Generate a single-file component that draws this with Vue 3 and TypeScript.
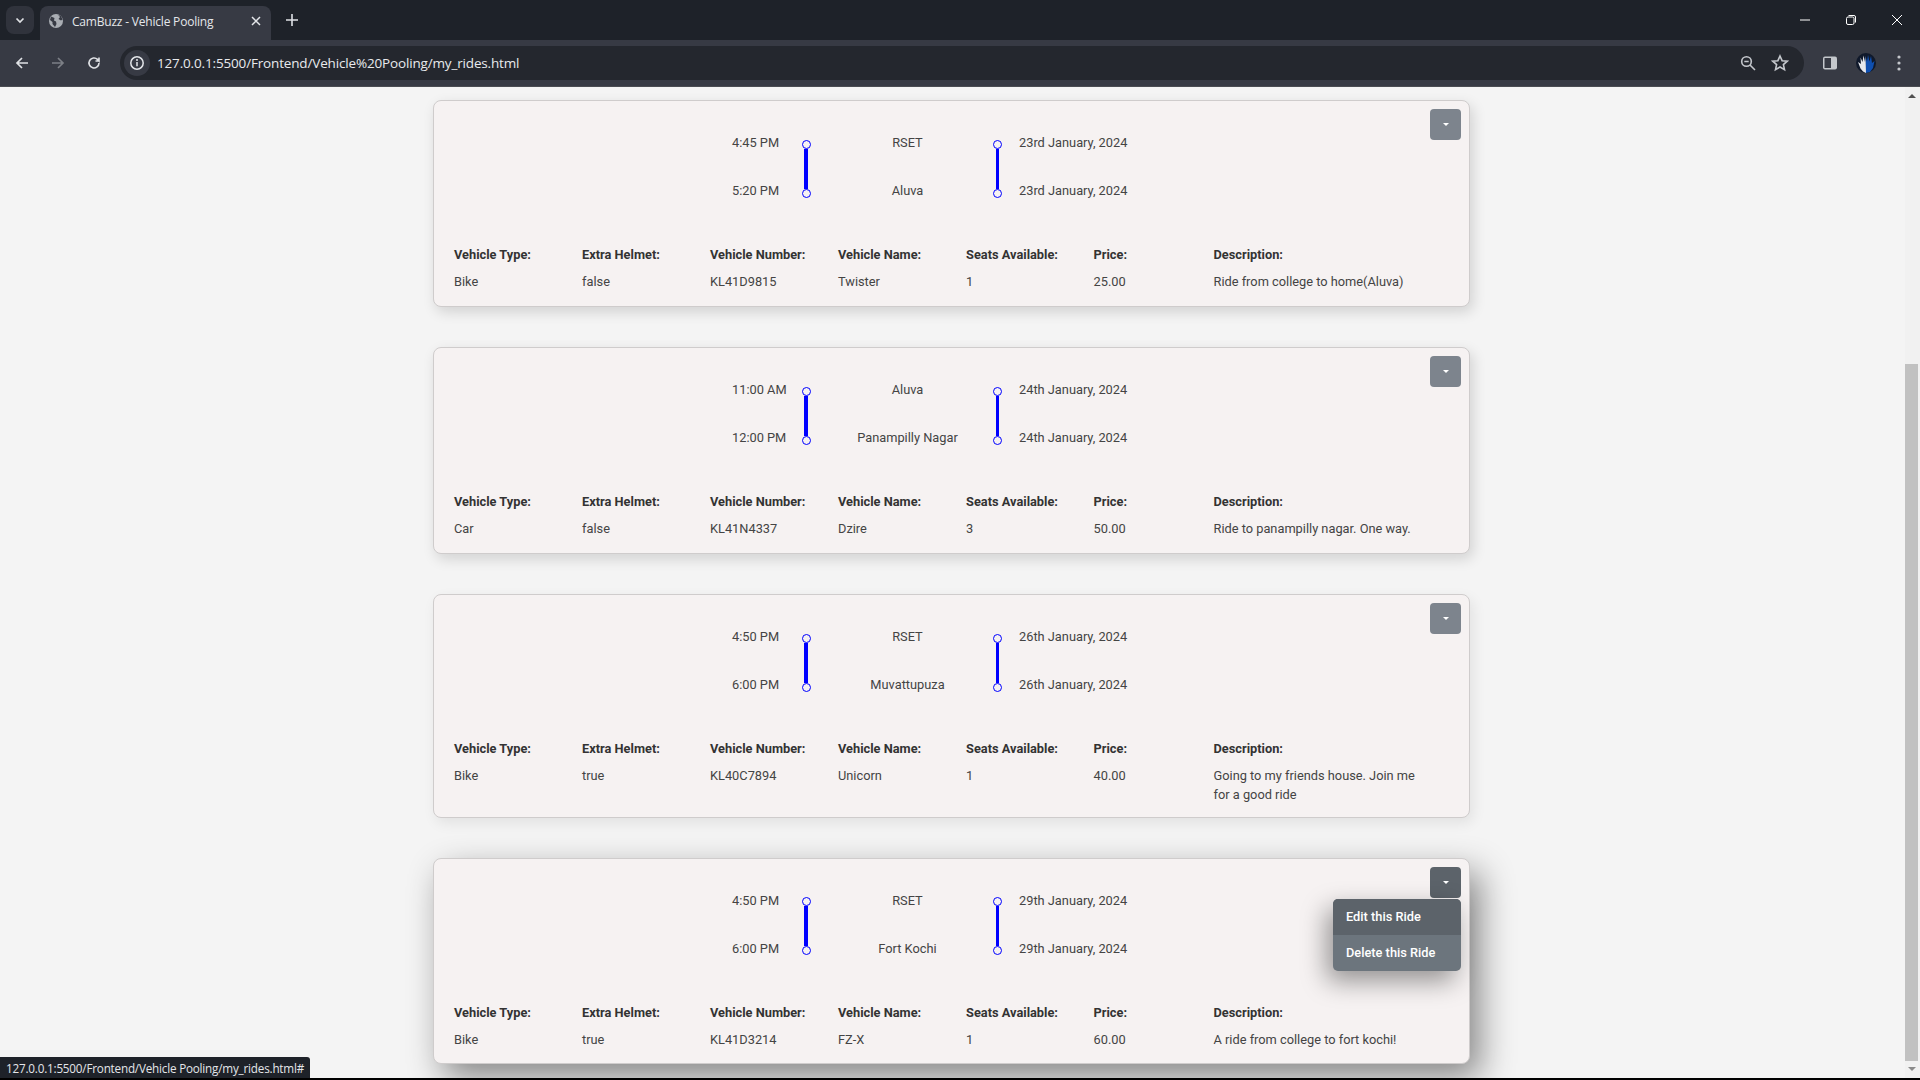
<script setup lang="ts">
interface Ride {
  times: [string, string]
  places: [string, string]
  date: string
  type: string
  helmet: string
  number: string
  name: string
  seats: string
  price: string
  desc: string
}
const rides: Ride[] = [
  { times: ['4:45 PM', '5:20 PM'], places: ['RSET', 'Aluva'], date: '23rd January, 2024', type: 'Bike', helmet: 'false', number: 'KL41D9815', name: 'Twister', seats: '1', price: '25.00', desc: 'Ride from college to home(Aluva)' },
  { times: ['11:00 AM', '12:00 PM'], places: ['Aluva', 'Panampilly Nagar'], date: '24th January, 2024', type: 'Car', helmet: 'false', number: 'KL41N4337', name: 'Dzire', seats: '3', price: '50.00', desc: 'Ride to panampilly nagar. One way.' },
  { times: ['4:50 PM', '6:00 PM'], places: ['RSET', 'Muvattupuza'], date: '26th January, 2024', type: 'Bike', helmet: 'true', number: 'KL40C7894', name: 'Unicorn', seats: '1', price: '40.00', desc: 'Going to my friends house. Join me for a good ride' },
  { times: ['4:50 PM', '6:00 PM'], places: ['RSET', 'Fort Kochi'], date: '29th January, 2024', type: 'Bike', helmet: 'true', number: 'KL41D3214', name: 'FZ-X', seats: '1', price: '60.00', desc: 'A ride from college to fort kochi!' },
]
const labels = ['Vehicle Type:', 'Extra Helmet:', 'Vehicle Number:', 'Vehicle Name:', 'Seats Available:', 'Price:', 'Description:']
</script>

<template>
  <div class="window">
    <header class="tabstrip">
      <button class="tabsearch">
        <svg width="12" height="12" viewBox="0 0 12 12"><path d="M2.5 4.5 6 8l3.5-3.5" fill="none" stroke="#dfe1e5" stroke-width="1.7" /></svg>
      </button>
      <div class="tab">
        <svg width="16" height="16" viewBox="0 0 16 16"><circle cx="8" cy="8" r="7" fill="#a9adb3" /><path d="M3 3.5 6.5 5 6 7.500 8 8.500 8.500 11 7 14 4.500 11 4.500 9 2 7ZM10 1.800 12 4 10.500 6 13 7.500 14.500 6.500 13 3Z" fill="#373a44" /></svg>
        <span class="tabtitle">CamBuzz - Vehicle Pooling</span>
        <svg class="tabx" width="10" height="10" viewBox="0 0 10 10"><path d="M1 1l8 8M9 1 1 9" stroke="#e4e6ea" stroke-width="1.500" /></svg>
      </div>
      <svg class="newtab" width="14" height="14" viewBox="0 0 14 14"><path d="M7 1v12M1 7h12" stroke="#dfe1e5" stroke-width="1.600" /></svg>
      <div class="winbtns">
        <svg width="12" height="12" viewBox="0 0 12 12"><path d="M1 6h10" stroke="#fff" stroke-width="1" /></svg>
        <svg width="12" height="12" viewBox="0 0 12 12"><rect x="1.500" y="3" width="7.500" height="7.500" rx="1.500" fill="none" stroke="#fff" /><path d="M3.500 1.500h5.500a1.500 1.500 0 0 1 1.500 1.500v5.500" fill="none" stroke="#fff" /></svg>
        <svg width="12" height="12" viewBox="0 0 12 12"><path d="M1 1l10 10M11 1 1 11" stroke="#fff" stroke-width="1" /></svg>
      </div>
    </header>

    <nav class="toolbar">
      <svg class="nav first" width="16" height="16" viewBox="0 0 16 16"><path d="M14 8H3M8 3 3 8l5 5" fill="none" stroke="#dfe1e5" stroke-width="1.700" /></svg>
      <svg class="nav" width="16" height="16" viewBox="0 0 16 16"><path d="M2 8h11M8 3l5 5-5 5" fill="none" stroke="#7c7f86" stroke-width="1.700" /></svg>
      <svg class="nav" width="16" height="16" viewBox="0 0 16 16"><path d="M13 8a5 5 0 1 1-1.500-3.600L13 6V2.500M13 6H9.500" fill="none" stroke="#dfe1e5" stroke-width="1.600" /></svg>
      <div class="omnibox">
        <span class="chip">
          <svg width="16" height="16" viewBox="0 0 16 16"><circle cx="8" cy="8" r="6.200" fill="none" stroke="#e4e6ea" stroke-width="1.500" /><path d="M8 7v4.200" stroke="#e4e6ea" stroke-width="1.500" /><circle cx="8" cy="5" r="1" fill="#e4e6ea" /></svg>
        </span>
        <span class="url">127.0.0.1:5500/Frontend/Vehicle%20Pooling/my_rides.html</span>
        <svg class="zoomicon" width="16" height="16" viewBox="0 0 16 16"><circle cx="6.500" cy="6.500" r="4.800" fill="none" stroke="#c4c7cc" stroke-width="1.600" /><path d="M4.300 6.500h4.400M10 10l5 5" stroke="#c4c7cc" stroke-width="1.600" /></svg>
        <svg class="star" width="18" height="18" viewBox="0 0 18 18"><path d="M9 2l2.100 4.700 5.100.5-3.800 3.400 1.100 5L9 13l-4.500 2.600 1.100-5L1.800 7.200l5.100-.5Z" fill="none" stroke="#c4c7cc" stroke-width="1.600" /></svg>
      </div>
      <svg class="panel" width="16" height="16" viewBox="0 0 16 16"><rect x="1" y="1.500" width="14" height="13" rx="2" fill="#c4c7cc" /><rect x="2.500" y="3" width="6.500" height="10" fill="#373a44" /></svg>
      <svg class="avatar" width="20" height="20" viewBox="0 0 20 20"><circle cx="10" cy="10" r="10" fill="#10192b" /><path d="M9.500 3 11 8.500 12 2l1.500 6.500L15 3l1 7 2.500-2-1.500 7-3 4-4.500 1Z" fill="#0f4fb0" /><path d="M9.500 3 9 9 7.500 2.500 6.500 9 4.500 4.500l.5 6.500-3-2 2.500 6.500 2.500 3 3 1.500Z" fill="#e6e8ec" /></svg>
      <svg class="dots" width="4" height="16" viewBox="0 0 4 16"><circle cx="2" cy="2" r="1.600" fill="#c4c7cc" /><circle cx="2" cy="8" r="1.600" fill="#c4c7cc" /><circle cx="2" cy="14" r="1.600" fill="#c4c7cc" /></svg>
    </nav>

    <div class="viewport">
      <main class="page">
        <article v-for="(r, i) in rides" :key="i" class="card" :class="{ hovered: i === 3, plain: i === 2 }">
          <div class="dropdown">
            <button class="toggle" :class="{ open: i === 3 }"><span class="caret"></span></button>
            <div v-if="i === 3" class="menu">
              <a class="item active">Edit this Ride</a>
              <a class="item">Delete this Ride</a>
            </div>
          </div>
          <section class="route">
            <div class="stack time"><span>{{ r.times[0] }}</span><span>{{ r.times[1] }}</span></div>
            <div class="tlslot first"><i class="dot"></i><i class="bar thick"></i><i class="dot"></i></div>
            <div class="stack place"><span>{{ r.places[0] }}</span><span>{{ r.places[1] }}</span></div>
            <div class="tlslot second"><i class="dot"></i><i class="bar"></i><i class="dot"></i></div>
            <div class="stack date"><span>{{ r.date }}</span><span>{{ r.date }}</span></div>
          </section>
          <section class="details">
            <b v-for="l in labels" :key="l">{{ l }}</b>
            <span>{{ r.type }}</span>
            <span>{{ r.helmet }}</span>
            <span>{{ r.number }}</span>
            <span>{{ r.name }}</span>
            <span>{{ r.seats }}</span>
            <span>{{ r.price }}</span>
            <span class="desc">{{ r.desc }}</span>
          </section>
        </article>
      </main>
      <aside class="scrollbar">
        <span class="arrow up"></span>
        <span class="thumb"></span>
        <span class="arrow down"></span>
      </aside>
      <div class="status">127.0.0.1:5500/Frontend/Vehicle Pooling/my_rides.html#</div>
    </div>
    <div class="blackstrip"></div>
  </div>
</template>

<style>
html, body { margin: 0; height: 100%; overflow: hidden; }
</style>

<style scoped>
.window { width: 1920px; height: 1080px; display: flex; flex-direction: column; background: #f4f4f4; overflow: hidden; }

.tabstrip { height: 40px; flex: none; background: #1e2229; display: flex; align-items: flex-start; box-sizing: border-box; padding: 6px 0 0 6px; }
.tabsearch { width: 28px; height: 28px; border: 0; padding: 0; border-radius: 8px; background: #30333c; display: flex; align-items: center; justify-content: center; }
.tab { margin-left: 6px; width: 231px; height: 34px; box-sizing: border-box; background: #373a44; border-radius: 8px 8px 0 0; display: flex; align-items: center; padding: 0 10px 4px 8px; }
.tabtitle { margin-left: 8px; flex: 1; font: 12px "Open Sans", sans-serif; letter-spacing: -0.2px; color: #e4e6ea; white-space: nowrap; }
.newtab { margin: 7px 0 0 14px; }
.winbtns { margin-left: auto; display: flex; gap: 34px; padding: 8px 17px 0 0; }

.toolbar { height: 47px; flex: none; background: #373a44; border-bottom: 1px solid #4a4c52; box-sizing: border-box; display: flex; align-items: center; }
.nav { margin-left: 20px; }
.nav.first { margin-left: 14px; }
.omnibox { margin-left: 18px; width: 1684px; height: 34px; border-radius: 17px; background: #24272e; display: flex; align-items: center; box-sizing: border-box; }
.chip { margin-left: 4px; width: 26px; height: 26px; border-radius: 50%; background: #373a44; display: flex; align-items: center; justify-content: center; }
.url { margin-left: 7px; font: 13.500px "Open Sans", sans-serif; letter-spacing: -0.16px; color: #e8eaed; white-space: nowrap; }
.zoomicon { margin-left: auto; }
.star { margin: 0 15px 0 15px; }
.panel { margin-left: 18px; }
.avatar { margin-left: 18px; }
.dots { margin-left: 21px; }

.viewport { flex: 1; min-height: 0; display: flex; position: relative; }
.page { flex: 1; box-sizing: border-box; padding: 13.400px 0 0 433px; font: 12.800px/19.200px Roboto, sans-serif; color: #444; }

.card { position: relative; box-sizing: border-box; width: 1037px; margin-bottom: 40.200px; padding: 32px 20px 12.200px; background: #f6f2f2; border: 1px solid #cfcccc; border-radius: 8px; box-shadow: 3px 5px 14px rgba(0, 0, 0, 0.14); }
.card.plain { box-shadow: 3px 5px 14px rgba(0, 0, 0, 0.08); }
.card.hovered { box-shadow: 10px 14px 34px rgba(0, 0, 0, 0.45); }

.dropdown { position: absolute; top: 7.900px; right: 8px; }
.toggle { display: flex; width: 31px; height: 31px; padding: 0; border: 0; border-radius: 4px; background: #7d848d; align-items: center; justify-content: center; }
.toggle.open { background: #5c636a; }
.caret { width: 0; height: 0; border-top: 3.200px solid #fff; border-left: 3.200px solid transparent; border-right: 3.200px solid transparent; }
.menu { position: absolute; top: 32.400px; right: 0; width: 128px; border-radius: 5px; overflow: hidden; background: #6c757d; box-shadow: -6px 10px 26px rgba(0, 0, 0, 0.4); }
.item { display: block; height: 35.800px; box-sizing: border-box; padding: 8px 0 0 13px; color: #fff; font-weight: 500; white-space: nowrap; }
.item.active { background: #5c636a; }

.route { display: flex; margin-left: 278px; height: 67.200px; }
.stack { display: flex; flex-direction: column; gap: 28.800px; white-space: nowrap; }
.time { width: 58px; }
.place { width: 171px; align-items: center; }
.date { padding-left: 18px; }
.tlslot { display: flex; flex-direction: column; align-items: center; height: 58px; margin-top: 6.800px; }
.tlslot.first { width: 32px; }
.tlslot.second { width: 8px; }
.dot { flex: none; box-sizing: border-box; width: 9px; height: 9px; border: 1.500px solid #0000ff; border-radius: 50%; background: #f6f2f2; }
.bar { flex: 1; width: 3px; background: #0000ff; }
.bar.thick { width: 4px; }

.details { display: grid; grid-template-columns: 128px 128px 128px 128px 127.500px 120px 210px; grid-template-rows: 19.200px minmax(21.600px, auto); row-gap: 7.800px; margin-top: 44.700px; }
.details b { font-weight: 700; color: #333; white-space: nowrap; }
.desc { display: block; }

.scrollbar { flex: none; width: 15px; box-sizing: border-box; padding-right: 2px; background: #f1f1f1; display: flex; flex-direction: column; align-items: center; }
.arrow { flex: none; width: 0; height: 0; border-left: 4px solid transparent; border-right: 4px solid transparent; }
.arrow.up { margin-top: 7px; border-bottom: 4px solid #505050; }
.arrow.down { margin: 6px 0 7px; border-top: 4px solid #8a8a8a; }
.thumb { width: 13px; height: 697px; flex: none; margin-top: 266px; background: #c1c1c1; }

.status { position: absolute; left: 0; bottom: 0; height: 21px; width: 310px; box-sizing: border-box; padding-left: 6px; background: #1e2229; border-radius: 0 3px 0 0; font: 11.700px/22px "Open Sans", sans-serif; letter-spacing: -0.2px; color: #e4e6ea; white-space: nowrap; }
.blackstrip { height: 2px; flex: none; background: #000; }
</style>
